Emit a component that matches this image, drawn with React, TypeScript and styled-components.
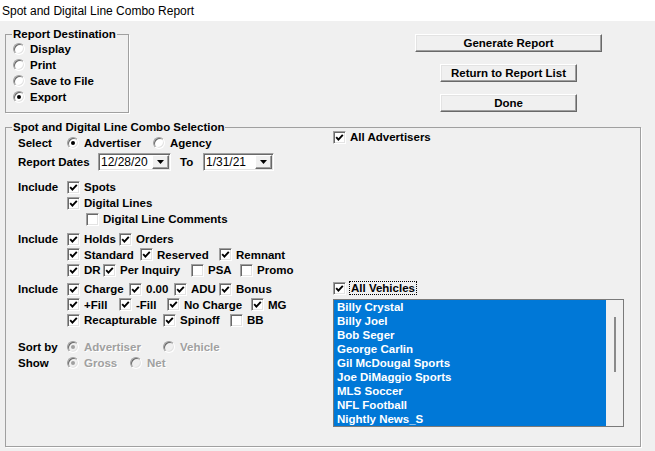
import React from 'react';
import styled, { createGlobalStyle, css } from 'styled-components';

const GlobalStyle = createGlobalStyle`
  html, body {
    margin: 0;
    padding: 0;
    background: #f0f0f0;
  }
  body {
    font-family: "Liberation Sans", Arial, sans-serif;
    font-size: 11.5px;
    font-weight: bold;
    color: #000;
  }
`;

const Window = styled.div`
  width: 655px;
  height: 451px;
  background: #f0f0f0;
  overflow: hidden;
`;

const TitleBar = styled.div`
  height: 21px;
  padding-left: 2px;
  display: flex;
  align-items: center;
  background: #fff;
  font-size: 12px;
  font-weight: normal;
`;

const Body = styled.div`
  padding: 7px 0 0 5px;
`;

const TopArea = styled.div`
  display: flex;
  align-items: flex-start;
`;

const GroupBox = styled.fieldset<{ $w: number; $h: number }>`
  box-sizing: border-box;
  width: ${p => p.$w}px;
  height: ${p => p.$h}px;
  margin: 0;
  padding: 0;
  min-width: 0;
  border: 1px solid #a0a0a0;
  box-shadow: 1px 1px 0 #fff;
`;

const Legend = styled.legend`
  margin-left: 6px;
  padding: 0 1px;
  line-height: 13px;
`;

const DestList = styled.div`
  display: flex;
  flex-direction: column;
  padding-left: 7px;
`;

const ButtonColumn = styled.div`
  display: flex;
  flex-direction: column;
  align-items: center;
  gap: 12px;
  width: 187px;
  margin-left: 286px;
  padding-top: 6px;
`;

const PushButton = styled.button<{ $w: number }>`
  box-sizing: border-box;
  width: ${p => p.$w}px;
  height: 18px;
  padding: 0;
  font: inherit;
  color: #000;
  background: #f0f0f0;
  border: 1px solid;
  border-color: #fff #696969 #696969 #fff;
  box-shadow: inset -1px -1px 0 #a0a0a0, inset 1px 1px 0 #e3e3e3;
  cursor: default;
`;

const SelectionBox = styled(GroupBox)`
  margin-top: 8px;
`;

const SelectionBody = styled.div`
  display: flex;
  padding-left: 12px;
`;

const LeftColumn = styled.div`
  width: 315px;
  display: flex;
  flex-direction: column;
`;

const RightColumn = styled.div`
  width: 291px;
  display: flex;
  flex-direction: column;
  margin-top: -4px;
`;

const FieldRow = styled.div<{ $h?: number; $mt?: number }>`
  display: flex;
  align-items: center;
  height: ${p => p.$h ?? 16}px;
  margin-top: ${p => p.$mt ?? 0}px;
  white-space: nowrap;
`;

const FieldLabel = styled.span<{ $w?: number }>`
  width: ${p => p.$w ?? 49}px;
  flex-shrink: 0;
`;

const OptionItem = styled.span<{ $w?: number; $indent?: number }>`
  display: inline-flex;
  align-items: center;
  gap: 4px;
  flex-shrink: 0;
  margin-left: ${p => p.$indent ?? 0}px;
  ${p =>
    p.$w &&
    css`
      width: ${p.$w}px;
    `}
`;

const OptionText = styled.span<{ $disabled?: boolean; $focus?: boolean }>`
  line-height: 12px;
  ${p =>
    p.$disabled &&
    css`
      color: #a0a0a0;
      text-shadow: 1px 1px 0 #fff;
    `}
  ${p =>
    p.$focus &&
    css`
      margin-left: -1px;
      padding: 0 1px;
      border: 1px dotted #000;
    `}
`;

const CheckBox = styled.span`
  box-sizing: border-box;
  width: 13px;
  height: 13px;
  flex-shrink: 0;
  display: flex;
  align-items: center;
  justify-content: center;
  background: #fff;
  border: 1px solid;
  border-color: #a0a0a0 #fff #fff #a0a0a0;
  box-shadow: inset 1px 1px 0 #696969, inset -1px -1px 0 #e3e3e3;
`;

const RadioCircle = styled.span<{ $disabled?: boolean }>`
  box-sizing: border-box;
  width: 12px;
  height: 12px;
  flex-shrink: 0;
  margin-right: 1px;
  border-radius: 50%;
  display: flex;
  align-items: center;
  justify-content: center;
  background: ${p => (p.$disabled ? '#f0f0f0' : '#fff')};
  border: 1px solid;
  border-color: #a0a0a0 #fff #fff #a0a0a0;
  box-shadow: inset 1px 1px 0 #696969, inset -1px -1px 0 #e3e3e3;
`;

const RadioDot = styled.span<{ $disabled?: boolean }>`
  width: 4px;
  height: 4px;
  border-radius: 50%;
  background: ${p => (p.$disabled ? '#a0a0a0' : '#000')};
`;

const DateBox = styled.div<{ $w: number }>`
  box-sizing: border-box;
  width: ${p => p.$w}px;
  height: 18px;
  flex-shrink: 0;
  display: flex;
  align-items: center;
  padding-left: 2px;
  background: #fff;
  border: 1px solid;
  border-color: #a0a0a0 #fff #fff #a0a0a0;
  box-shadow: inset 1px 1px 0 #696969, inset -1px -1px 0 #e3e3e3;
  font-size: 12px;
  font-weight: normal;
`;

const DateText = styled.span`
  flex: 1;
`;

const DropButton = styled.span`
  box-sizing: border-box;
  width: 17px;
  height: 14px;
  margin-right: 1px;
  display: flex;
  align-items: center;
  justify-content: center;
  background: #f0f0f0;
  border: 1px solid;
  border-color: #fff #696969 #696969 #fff;
  box-shadow: inset -1px -1px 0 #a0a0a0;
`;

const ToLabel = styled.span`
  width: 23px;
  margin-left: 9px;
`;

const ListBox = styled.div`
  box-sizing: border-box;
  width: 291px;
  height: 128px;
  margin-top: 4px;
  display: flex;
  border: 1px solid #7a7a7a;
  background: #0078d7;
`;

const ListItems = styled.ul`
  flex: 1;
  margin: 0;
  padding: 0 0 0 3px;
  list-style: none;
  color: #fff;
`;

const ListItem = styled.li`
  height: 14px;
  line-height: 14px;
  white-space: nowrap;
`;

const ScrollTrack = styled.div`
  width: 17px;
  display: flex;
  justify-content: center;
  padding-top: 17px;
  background: #f0f0f0;
`;

const ScrollThumb = styled.div`
  width: 2px;
  height: 55px;
  background: #8a8a8a;
`;

type Opt = { label: string; w?: number; checked?: boolean; indent?: number };

const Tick = () => (
  <svg width="9" height="9" viewBox="0 0 9 9">
    <path d="M1.2 4.2 L3.4 6.6 L7.8 1.8" fill="none" stroke="#000" strokeWidth="1.9" />
  </svg>
);

const Arrow = () => (
  <svg width="7" height="4" viewBox="0 0 7 4">
    <polygon points="0,0 7,0 3.5,4" fill="#000" />
  </svg>
);

const Checks = ({ items }: { items: Opt[] }) => (
  <>
    {items.map(o => (
      <OptionItem key={o.label} $w={o.w} $indent={o.indent}>
        <CheckBox>{o.checked && <Tick />}</CheckBox>
        <OptionText>{o.label}</OptionText>
      </OptionItem>
    ))}
  </>
);

const Radios = ({ items, disabled }: { items: Opt[]; disabled?: boolean }) => (
  <>
    {items.map(o => (
      <OptionItem key={o.label} $w={o.w}>
        <RadioCircle $disabled={disabled}>{o.checked && <RadioDot $disabled={disabled} />}</RadioCircle>
        <OptionText $disabled={disabled}>{o.label}</OptionText>
      </OptionItem>
    ))}
  </>
);

const destinations = [
  { label: 'Display' },
  { label: 'Print' },
  { label: 'Save to File' },
  { label: 'Export', checked: true },
];

const typeRows: Opt[][] = [
  [{ label: 'Holds', w: 52, checked: true }, { label: 'Orders', checked: true }],
  [
    { label: 'Standard', w: 73, checked: true },
    { label: 'Reserved', w: 79, checked: true },
    { label: 'Remnant', checked: true },
  ],
  [
    { label: 'DR', w: 36, checked: true },
    { label: 'Per Inquiry', w: 88, checked: true },
    { label: 'PSA', w: 49 },
    { label: 'Promo' },
  ],
];

const chargeRows: Opt[][] = [
  [
    { label: 'Charge', w: 62, checked: true },
    { label: '0.00', w: 45, checked: true },
    { label: 'ADU', w: 45, checked: true },
    { label: 'Bonus', checked: true },
  ],
  [
    { label: '+Fill', w: 52, checked: true },
    { label: '-Fill', w: 48, checked: true },
    { label: 'No Charge', w: 84, checked: true },
    { label: 'MG', checked: true },
  ],
  [
    { label: 'Recapturable', w: 96, checked: true },
    { label: 'Spinoff', w: 67, checked: true },
    { label: 'BB' },
  ],
];

const vehicles = [
  'Billy Crystal',
  'Billy Joel',
  'Bob Seger',
  'George Carlin',
  'Gil McDougal Sports',
  'Joe DiMaggio Sports',
  'MLS Soccer',
  'NFL Football',
  'Nightly News_S',
];

const rowHeights = [16, 15, 16];

const App = () => {
  return (
    <Window>
      <GlobalStyle />
      <TitleBar>Spot and Digital Line Combo Report</TitleBar>
      <Body>
        <TopArea>
          <GroupBox $w={124} $h={85}>
            <Legend>Report Destination</Legend>
            <DestList>
              {destinations.map(d => (
                <FieldRow key={d.label}>
                  <Radios items={[d]} />
                </FieldRow>
              ))}
            </DestList>
          </GroupBox>
          <ButtonColumn>
            <PushButton $w={187}>Generate Report</PushButton>
            <PushButton $w={137}>Return to Report List</PushButton>
            <PushButton $w={137}>Done</PushButton>
          </ButtonColumn>
        </TopArea>

        <SelectionBox $w={636} $h={326}>
          <Legend>Spot and Digital Line Combo Selection</Legend>
          <SelectionBody>
            <LeftColumn>
              <FieldRow $h={18}>
                <FieldLabel>Select</FieldLabel>
                <Radios items={[{ label: 'Advertiser', w: 86, checked: true }, { label: 'Agency' }]} />
              </FieldRow>
              <FieldRow $h={19}>
                <FieldLabel $w={80}>Report Dates</FieldLabel>
                <DateBox $w={73}>
                  <DateText>12/28/20</DateText>
                  <DropButton>
                    <Arrow />
                  </DropButton>
                </DateBox>
                <ToLabel>To</ToLabel>
                <DateBox $w={71}>
                  <DateText>1/31/21</DateText>
                  <DropButton>
                    <Arrow />
                  </DropButton>
                </DateBox>
              </FieldRow>

              <FieldRow $mt={8}>
                <FieldLabel>Include</FieldLabel>
                <Checks items={[{ label: 'Spots', checked: true }]} />
              </FieldRow>
              <FieldRow>
                <FieldLabel />
                <Checks items={[{ label: 'Digital Lines', checked: true }]} />
              </FieldRow>
              <FieldRow>
                <FieldLabel />
                <Checks items={[{ label: 'Digital Line Comments', indent: 19 }]} />
              </FieldRow>

              {typeRows.map((row, i) => (
                <FieldRow key={i} $h={rowHeights[i]} $mt={i === 0 ? 4 : 0}>
                  <FieldLabel>{i === 0 ? 'Include' : ''}</FieldLabel>
                  <Checks items={row} />
                </FieldRow>
              ))}

              {chargeRows.map((row, i) => (
                <FieldRow key={i} $h={rowHeights[i]} $mt={i === 0 ? 3 : 0}>
                  <FieldLabel>{i === 0 ? 'Include' : ''}</FieldLabel>
                  <Checks items={row} />
                </FieldRow>
              ))}

              <FieldRow $h={17} $mt={10}>
                <FieldLabel>Sort by</FieldLabel>
                <Radios disabled items={[{ label: 'Advertiser', w: 96, checked: true }, { label: 'Vehicle' }]} />
              </FieldRow>
              <FieldRow>
                <FieldLabel>Show</FieldLabel>
                <Radios disabled items={[{ label: 'Gross', w: 63, checked: true }, { label: 'Net' }]} />
              </FieldRow>
            </LeftColumn>

            <RightColumn>
              <FieldRow $h={14}>
                <Checks items={[{ label: 'All Advertisers', checked: true }]} />
              </FieldRow>
              <FieldRow $h={14} $mt={137}>
                <OptionItem>
                  <CheckBox>
                    <Tick />
                  </CheckBox>
                  <OptionText $focus>All Vehicles</OptionText>
                </OptionItem>
              </FieldRow>
              <ListBox>
                <ListItems>
                  {vehicles.map(v => (
                    <ListItem key={v}>{v}</ListItem>
                  ))}
                </ListItems>
                <ScrollTrack>
                  <ScrollThumb />
                </ScrollTrack>
              </ListBox>
            </RightColumn>
          </SelectionBody>
        </SelectionBox>
      </Body>
    </Window>
  );
};

export default App;
